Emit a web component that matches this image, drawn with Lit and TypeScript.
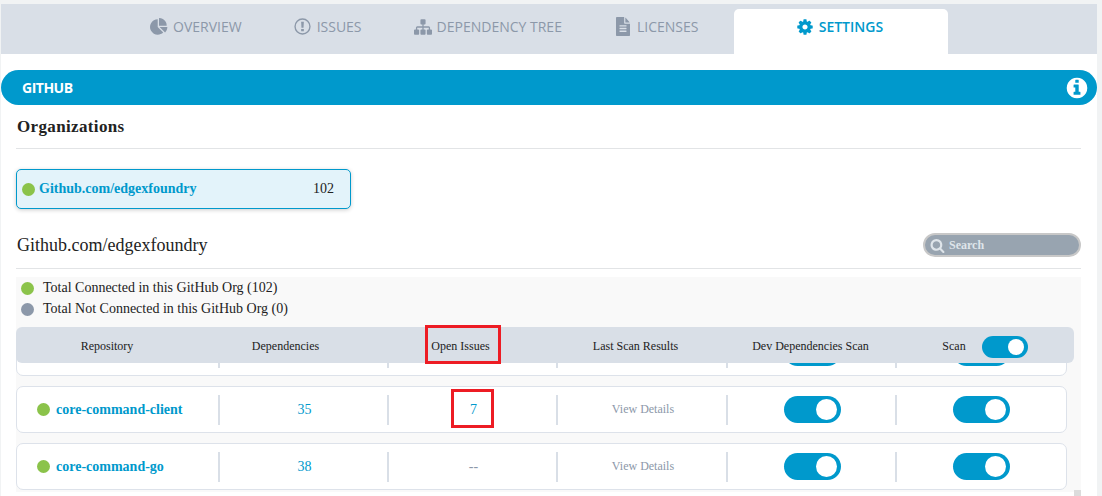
import {LitElement, css, html, svg} from "lit";
import {customElement} from "lit/decorators.js";

const ICONS: Record<string, string> = {
  pie: "M768 890l546 546q-106 108-247.5 168t-298.5 60q-209 0-385.5-103t-279.5-279.5-103-385.5 103-385.5 279.5-279.5 385.5-103v762zm187 6h773q0 157-60 298.5t-168 247.5zm709-128h-768v-768q209 0 385.5 103t279.5 279.5 103 385.5z",
  sitemap: "M1792 1248v320q0 40-28 68t-68 28h-320q-40 0-68-28t-28-68v-320q0-40 28-68t68-28h96v-192h-512v192h96q40 0 68 28t28 68v320q0 40-28 68t-68 28h-320q-40 0-68-28t-28-68v-320q0-40 28-68t68-28h96v-192h-512v192h96q40 0 68 28t28 68v320q0 40-28 68t-68 28h-320q-40 0-68-28t-28-68v-320q0-40 28-68t68-28h96v-192q0-52 38-90t90-38h512v-192h-96q-40 0-68-28t-28-68v-320q0-40 28-68t68-28h320q40 0 68 28t28 68v320q0 40-28 68t-68 28h-96v192h512q52 0 90 38t38 90v192h96q40 0 68 28t28 68z",
  file: "M1596 476q14 14 28 36h-472v-472q22 14 36 28zm-476 164h544v1056q0 40-28 68t-68 28h-1344q-40 0-68-28t-28-68v-1600q0-40 28-68t68-28h800v544q0 40 28 68t68 28zm160 736v-64q0-14-9-23t-23-9h-704q-14 0-23 9t-9 23v64q0 14 9 23t23 9h704q14 0 23-9t9-23zm0-256v-64q0-14-9-23t-23-9h-704q-14 0-23 9t-9 23v64q0 14 9 23t23 9h704q14 0 23-9t9-23zm0-256v-64q0-14-9-23t-23-9h-704q-14 0-23 9t-9 23v64q0 14 9 23t23 9h704q14 0 23-9t9-23z",
  cog: "M1152 896q0-106-75-181t-181-75-181 75-75 181 75 181 181 75 181-75 75-181zm512-109v222q0 12-8 23t-20 13l-185 28q-19 54-39 91 35 50 107 138 10 12 10 25t-9 23q-27 37-99 108t-94 71q-12 0-26-9l-138-108q-44 23-91 38-16 136-29 186-7 28-36 28h-222q-14 0-24.5-8.5t-11.5-21.5l-28-184q-49-16-90-37l-141 107q-10 9-25 9-14 0-25-11-126-114-165-168-7-10-7-23 0-12 8-23 15-21 51-66.5t54-70.5q-27-50-41-99l-183-27q-13-2-21-12.5t-8-23.5v-222q0-12 8-23t19-13l186-28q14-46 39-92-40-57-107-138-10-12-10-24 0-10 9-23 26-36 98.5-107.5t94.5-71.5q13 0 26 10l138 107q44-23 91-38 16-136 29-186 7-28 36-28h222q14 0 24.5 8.5t11.5 21.5l28 184q49 16 90 37l142-107q9-9 24-9 13 0 25 10 129 119 165 170 7 8 7 22 0 12-8 23-15 21-51 66.5t-54 70.5q26 50 41 98l183 28q13 2 21 12.5t8 23.5z",
  info: "M1152 1376v-160q0-14-9-23t-23-9h-96v-512q0-14-9-23t-23-9h-320q-14 0-23 9t-9 23v160q0 14 9 23t23 9h96v320h-96q-14 0-23 9t-9 23v160q0 14 9 23t23 9h448q14 0 23-9t9-23zm-128-896v-160q0-14-9-23t-23-9h-192q-14 0-23 9t-9 23v160q0 14 9 23t23 9h192q14 0 23-9t9-23zm640 416q0 209-103 385.5t-279.5 279.5-385.5 103-385.5-103-279.5-279.5-103-385.5 103-385.5 279.5-279.5 385.5-103 385.5 103 279.5 279.5 103 385.5z",
  search: "M1216 832q0-185-131.5-316.5t-316.5-131.5-316.5 131.5-131.5 316.5 131.5 316.5 316.5 131.5 316.5-131.5 131.5-316.5zm512 832q0 52-38 90t-90 38q-54 0-90-38l-343-342q-179 124-399 124-143 0-273.5-55.5t-225-150-150-225-55.5-273.5 55.5-273.5 150-225 225-150 273.5-55.5 273.5 55.5 225 150 150 225 55.5 273.5q0 220-124 399l343 343q37 37 37 90z",
  alert: "M896 128a768 768 0 1 0 0 1536a768 768 0 1 0 0-1536zm0 130a638 638 0 1 1 0 1276a638 638 0 1 1 0-1276zM768 448h256l-32 560h-192zM768 1120h256v224h-256z",
};

const icon = (name: string, cls = "") => html`
  <svg class="icon ${cls || name}" viewBox=${name === "file" ? "128 0 1536 1792" : "0 0 1792 1792"} preserveAspectRatio="none">
    ${svg`<path fill="currentColor" fill-rule="evenodd" d=${ICONS[name]} />`}
  </svg>`;

const TABS = [
  {label: "Overview", icon: "pie"},
  {label: "Issues", icon: "alert"},
  {label: "Dependency Tree", icon: "sitemap"},
  {label: "Licenses", icon: "file"},
];

// the first row is scrolled under the table head, only its toggles peek out
const REPOS = [
  {name: "", deps: "", issues: ""},
  {name: "core-command-client", deps: "35", issues: "7"},
  {name: "core-command-go", deps: "38", issues: "--"},
];

@customElement("app-root")
export class AppRoot extends LitElement {
  static styles = css`
    :host {
      display: block;
      width: 1102px;
      height: 496px;
      overflow: hidden;
      background: #f1f3f4;
      font-family: "Liberation Serif", serif;
      color: #222;
    }
    .page {
      position: relative;
      margin: 4px 5px 0 1px;
      height: 492px;
      background: #fff;
      overflow: hidden;
    }
    .icon {
      display: block;
      flex: none;
      width: 18px;
      height: 18px;
    }
    .icon.alert {
      width: 19px;
      height: 19px;
      margin: 0 0 0 -1px;
    }
    .icon.file {
      width: 14px;
      height: 19px;
      margin: 0 2px 0 2px;
    }
    .icon.banner-info {
      width: 24px;
      height: 24px;
    }
    .icon.search-icon {
      width: 15px;
      height: 15px;
    }
    .tabs {
      display: flex;
      height: 50px;
      padding-left: 123px;
      background: #d9dfe7;
      font-family: "Open Sans", sans-serif;
      font-size: 14px;
      text-transform: uppercase;
      color: #8c98a9;
    }
    .tab {
      display: flex;
      align-items: center;
      gap: 5px;
      padding: 0 26px;
      height: 45px;
    }
    .tab.active {
      justify-content: center;
      box-sizing: border-box;
      width: 214px;
      height: 45px;
      margin: 5px 0 0 10px;
      padding: 0 4px 10px 0;
      background: #fff;
      border-radius: 5px 5px 0 0;
      color: #0099cc;
      font-weight: 600;
    }
    .banner {
      display: flex;
      align-items: center;
      justify-content: space-between;
      height: 35px;
      margin-top: 16px;
      padding: 0 8px 0 21px;
      background: #0099cc;
      border-radius: 18px;
      color: #fff;
      font-family: "Open Sans", sans-serif;
      font-size: 14px;
      font-weight: 700;
      letter-spacing: -0.5px;
    }
    .body {
      padding: 0 16px 0 15px;
    }
    h2 {
      margin: 0;
      padding: 12px 0 12px 1px;
      height: 19px;
      line-height: 19px;
      font-size: 17px;
      letter-spacing: 0.35px;
      font-weight: 700;
      color: #222;
      border-bottom: 1px solid #e2e4e6;
    }
    .org {
      display: flex;
      align-items: center;
      box-sizing: border-box;
      width: 335px;
      height: 40px;
      margin-top: 20px;
      padding: 0 16px 0 5px;
      background: #e3f3fa;
      border: 1px solid #0099cc;
      border-radius: 5px;
      box-shadow: 0 1px 4px rgba(0, 0, 0, 0.2);
      font-size: 14px;
    }
    .dot {
      flex: none;
      width: 13px;
      height: 13px;
      border-radius: 50%;
      background: #8bc34a;
    }
    .dot.off {
      background: #8c98a9;
    }
    .org-name {
      flex: 1;
      margin-left: 4px;
      font-weight: 700;
      color: #0099cc;
    }
    .org-head {
      display: flex;
      align-items: center;
      justify-content: space-between;
      box-sizing: border-box;
      height: 60px;
      padding: 24px 0 11px 1px;
      border-bottom: 1px solid #e2e4e6;
      font-size: 18px;
    }
    .search {
      display: flex;
      align-items: center;
      gap: 4px;
      box-sizing: border-box;
      width: 158px;
      height: 24px;
      padding-left: 5px;
      background: #98a4b0;
      border: 2px solid #c8c8c8;
      border-radius: 12px;
      color: #dfe5ea;
      font-size: 12px;
      font-weight: 700;
    }
    .panel {
      margin-top: 8px;
      background: #f9f9f9;
    }
    .legend {
      display: flex;
      flex-direction: column;
      gap: 5px;
      height: 50px;
      padding: 3px 0 0 5px;
      box-sizing: border-box;
      font-size: 14px;
    }
    .legend div {
      display: flex;
      align-items: center;
      gap: 9px;
      height: 16px;
    }
    .thead,
    .row {
      display: grid;
      align-items: center;
    }
    .thead {
      position: relative;
      z-index: 1;
      grid-template-columns: 182px 175px 175px 175px 175px 176px;
      box-sizing: border-box;
      width: 1058px;
      height: 36px;
      padding-top: 2px;
      background: #d9dfe7;
      border-radius: 6px;
      font-size: 12px;
      text-align: center;
    }
    .thead span {
      display: flex;
      align-items: center;
      justify-content: center;
    }
    .thead .scan {
      gap: 16px;
      padding-right: 2px;
    }
    .list {
      width: 1058px;
      height: 129px;
      margin-top: -36px;
      padding-top: 36px;
      overflow: hidden;
      background: #f9f9f9;
    }
    .rows {
      display: flex;
      flex-direction: column;
      gap: 10px;
      width: 1051px;
      margin-top: -34px;
    }
    .row {
      grid-template-columns: 201px 2px 167px 2px 167px 2px 168px 2px 167px 2px 1fr;
      box-sizing: border-box;
      height: 47px;
      background: #fff;
      border: 1px solid #dde2ea;
      border-radius: 7px;
      font-size: 14px;
      text-align: center;
    }
    .sep {
      height: 30px;
      background: #d9dfe7;
    }
    .repo {
      display: flex;
      align-items: center;
      gap: 6px;
      padding-left: 20px;
      font-size: 14px;
      font-weight: 700;
      color: #0099cc;
    }
    .cell {
      padding-left: 2px;
    }
    .num {
      font-size: 14px;
      color: #0099cc;
    }
    .none {
      color: #8c98a9;
    }
    .details {
      font-size: 12px;
      color: #8c98a9;
    }
    .toggle {
      position: relative;
      display: block;
      width: 57px;
      height: 27px;
      margin: 0 auto;
      background: #0099cc;
      border-radius: 14px;
    }
    .toggle::after {
      content: "";
      position: absolute;
      top: 3px;
      right: 4px;
      width: 21px;
      height: 21px;
      border-radius: 50%;
      background: #fff;
    }
    .toggle.small {
      width: 46px;
      height: 22px;
      margin: 2px 0 0;
      border-radius: 11px;
    }
    .toggle.small::after {
      top: 3px;
      right: 4px;
      width: 16px;
      height: 16px;
    }
    /* annotation boxes drawn on top of the screenshot */
    .mark {
      position: absolute;
      z-index: 2;
      box-sizing: border-box;
      border: 3px solid #ed1c24;
    }
    .mark.head {
      left: 424px;
      top: 321px;
      width: 76px;
      height: 39px;
    }
    .mark.value {
      left: 450px;
      top: 385px;
      width: 43px;
      height: 39px;
    }
    .thumb {
      position: absolute;
      left: 1073px;
      top: 486px;
      width: 7px;
      height: 6px;
      background: #dcdcdc;
    }
  `;

  render() {
    return html`
      <div class="page">
        <nav class="tabs">
          ${TABS.map((t) => html`
            <div class="tab">${icon(t.icon)}<span>${t.label}</span></div>
          `)}
          <div class="tab active">${icon("cog")}<span>Settings</span></div>
        </nav>

        <div class="banner"><span>GITHUB</span>${icon("info", "banner-info")}</div>

        <div class="body">
          <h2>Organizations</h2>
          <div class="org">
            <span class="dot"></span>
            <span class="org-name">Github.com/edgexfoundry</span>
            <span>102</span>
          </div>

          <div class="org-head">
            <span>Github.com/edgexfoundry</span>
            <div class="search">${icon("search", "search-icon")}<span>Search</span></div>
          </div>

          <div class="panel">
            <div class="legend">
              <div><span class="dot"></span>Total Connected in this GitHub Org (102)</div>
              <div><span class="dot off"></span>Total Not Connected in this GitHub Org (0)</div>
            </div>
            <div class="thead">
              <span>Repository</span>
              <span>Dependencies</span>
              <span>Open Issues</span>
              <span>Last Scan Results</span>
              <span>Dev Dependencies Scan</span>
              <span class="scan">Scan <i class="toggle small"></i></span>
            </div>
            <div class="list">
              <div class="rows">
                ${REPOS.map((r) => html`
                  <div class="row">
                    <div class="repo">${r.name ? html`<span class="dot"></span>${r.name}` : ""}</div>
                    <div class="sep"></div>
                    <div class="cell num">${r.deps}</div>
                    <div class="sep"></div>
                    <div class="cell num ${r.issues === "--" ? "none" : ""}">${r.issues}</div>
                    <div class="sep"></div>
                    <div class="cell details">${r.name ? "View Details" : ""}</div>
                    <div class="sep"></div>
                    <div class="cell"><i class="toggle"></i></div>
                    <div class="sep"></div>
                    <div><i class="toggle"></i></div>
                  </div>
                `)}
              </div>
            </div>
          </div>
        </div>

        <div class="mark head"></div>
        <div class="mark value"></div>
        <div class="thumb"></div>
      </div>
    `;
  }
}
